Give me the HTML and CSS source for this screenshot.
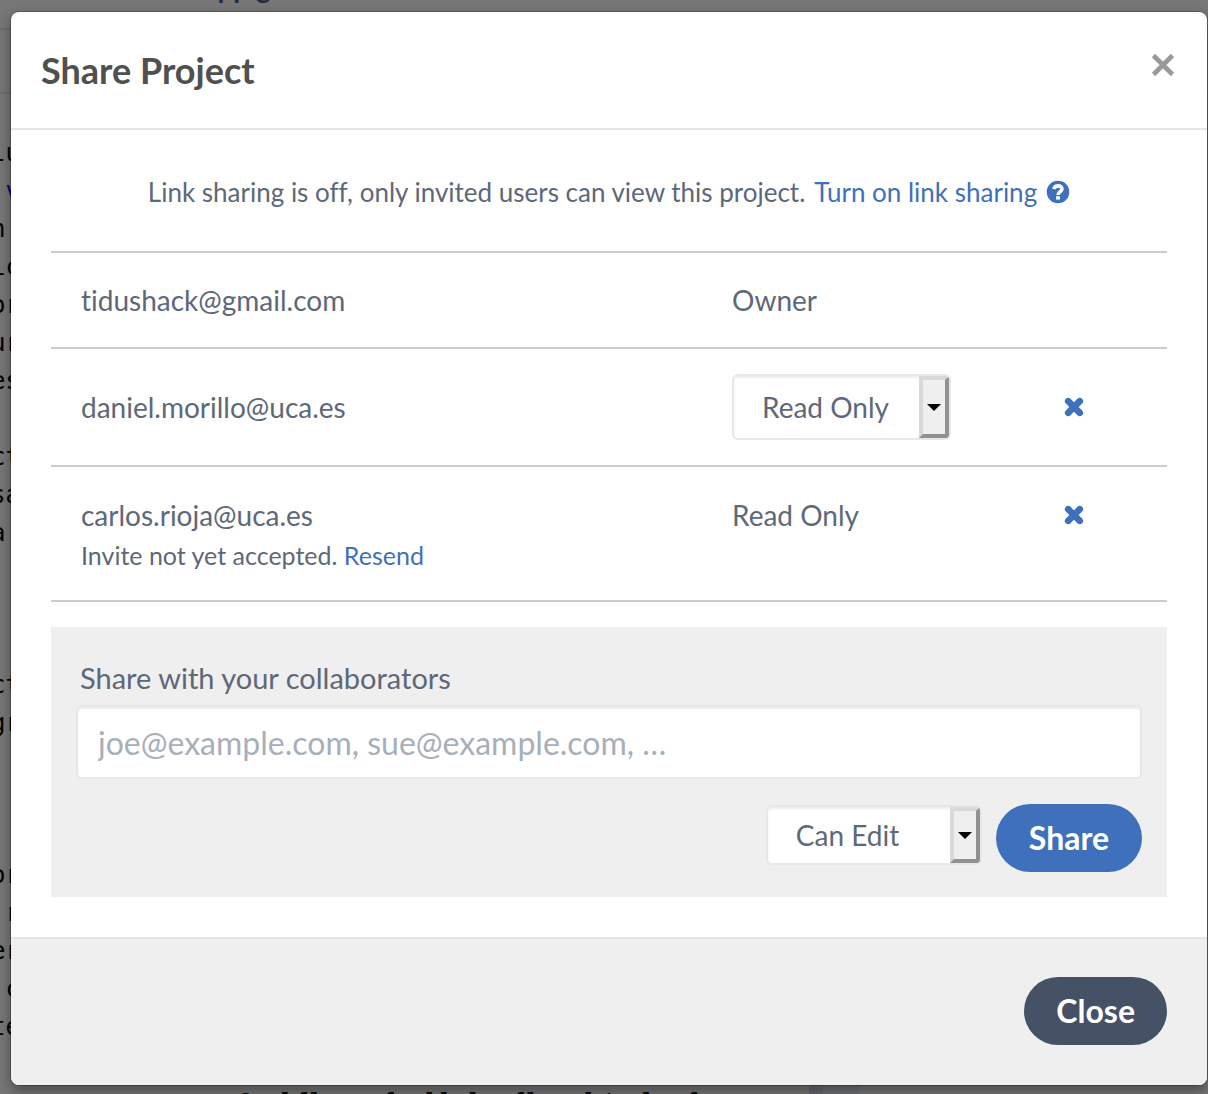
FILE: index.html
```html
<!DOCTYPE html>
<html lang="en">
<head>
<meta charset="utf-8">
<meta name="viewport" content="width=device-width, initial-scale=1">
<title>Share Project</title>
<link rel="stylesheet" href="styles.css">
</head>
<body>
<div class="editor" aria-hidden="true">
<div class="toolbar"><span class="project-name">App go</span></div>
<div class="tabs"></div>
<pre class="code">

lu
 <span class="keyword">v</span>
n
ic
or
ur
es

ct
sa
a



ct
gr



or
 r
er
 c
te

                 Caslfl comfuell la fl esl/col uf</pre>
<div class="resizer"></div>
</div>
<div class="modal" role="dialog" aria-modal="true" aria-labelledby="title">
  <header class="modal-header">
    <h1 class="title" id="title">Share Project</h1>
    <button class="dismiss" type="button" aria-label="Dismiss">
      <svg width="24" height="24" viewBox="0 0 24 24"><path d="M2.500 2.500L21.500 21.500M21.500 2.500L2.500 21.500" stroke="#999" stroke-width="4.600" fill="none"/></svg>
    </button>
  </header>
  <main class="modal-body">
    <p class="link-sharing">
      <span>Link sharing is off, only invited users can view this project.</span>
      <a href="#">Turn on link sharing</a>
      <svg class="help" width="24" height="24" viewBox="0 0 24 24" role="img" aria-label="Help"><circle cx="12" cy="12" r="11.300" fill="#3f70bc"/><path d="M7.800 9C9 4.600 16 5 16 9C16 12 12 11.600 12 15" stroke="#fff" stroke-width="3.600" fill="none"/><path d="M10.100 16.200h3.800v3.400h-3.800z" fill="#fff"/></svg>
    </p>
    <ul class="members">
      <li class="member">
        <div class="email">tidushack@gmail.com</div>
        <div class="role">Owner</div>
      </li>
      <li class="member member-editable">
        <div class="email">daniel.morillo@uca.es</div>
        <div class="role">
          <div class="select-box">
            <select aria-label="Access for daniel.morillo@uca.es"><option>Read Only</option><option>Can Edit</option></select>
            <span class="arrow"></span>
          </div>
        </div>
        <button class="remove" type="button" aria-label="Remove daniel.morillo@uca.es">
          <svg width="20" height="20" viewBox="0 0 20 20"><path d="M4.200 4.200L15.800 15.800M15.800 4.200L4.200 15.800" stroke="#3f70bc" stroke-width="6.600" stroke-linecap="round" fill="none"/></svg>
        </button>
      </li>
      <li class="member member-invited">
        <div class="email">
          <div>carlos.rioja@uca.es</div>
          <div class="invite">Invite not yet accepted. <a href="#">Resend</a></div>
        </div>
        <div class="role">Read Only</div>
        <button class="remove" type="button" aria-label="Remove carlos.rioja@uca.es">
          <svg width="20" height="20" viewBox="0 0 20 20"><path d="M4.200 4.200L15.800 15.800M15.800 4.200L4.200 15.800" stroke="#3f70bc" stroke-width="6.600" stroke-linecap="round" fill="none"/></svg>
        </button>
      </li>
    </ul>
    <form class="invite-form">
      <label class="invite-label" for="emails">Share with your collaborators</label>
      <input class="emails" id="emails" type="text" placeholder="joe@example.com, sue@example.com, …">
      <div class="actions">
        <div class="select-box select-small">
          <select aria-label="Access level"><option>Can Edit</option><option>Read Only</option></select>
          <span class="arrow"></span>
        </div>
        <button class="btn btn-primary" type="button">Share</button>
      </div>
    </form>
  </main>
  <footer class="modal-footer">
    <button class="btn btn-dark" type="button">Close</button>
  </footer>
</div>
</body>
</html>
```
FILE: styles.css
```css
* { box-sizing: border-box; }
body {
  margin: 0;
  position: relative;
  padding: 12px 1px 9px 11px;
  background: #777;
  color: #5d6879;
  font-family: Lato, "Open Sans", sans-serif;
  font-size: 28px;
  line-height: 40px;
  font-variant-ligatures: none;
}
a { color: #3f70bc; text-decoration: none; }
button, input, select { font: inherit; color: inherit; font-variant-ligatures: none; }
button { border: 0; padding: 0; background: none; cursor: pointer; }

.editor { position: absolute; inset: 0; overflow: hidden; }
.toolbar {
  display: flex;
  align-items: flex-start;
  height: 30px;
  padding-left: 198px;
  border-bottom: 2px solid #6c6d70;
  color: #232b3c;
}
.project-name { margin-top: -33px; font-weight: 700; }
.tabs { height: 64px; border-bottom: 2px solid #6c6d70; }
.code {
  margin: 2px 0 0 -9px;
  color: #000;
  font-family: "DejaVu Sans Mono", monospace;
  font-size: 24px;
  line-height: 38px;
}
.keyword { color: #00008b; }
.resizer {
  position: absolute;
  left: 67%;
  bottom: 0;
  width: 50px;
  height: 20px;
  border-left: 14px solid #66696e;
  background: #6f7174;
}

.modal {
  position: relative;
  background: #fff;
  border-radius: 8px;
  box-shadow: 0 0 0 1px rgba(0, 0, 0, 0.2), 0 6px 14px rgba(0, 0, 0, 0.4);
}
.modal-header {
  display: flex;
  justify-content: space-between;
  align-items: center;
  height: 118px;
  padding: 0 32px 0 30px;
  border-bottom: 2px solid #e5e5e5;
}
.title { margin: 0; color: #505050; font-size: 36px; font-weight: 700; line-height: 48px; }
.dismiss { display: flex; margin-bottom: 10px; }
.modal-body { padding: 40px; }
.link-sharing {
  display: flex;
  justify-content: center;
  align-items: center;
  gap: 9px;
  margin: 0;
  padding: 2px 0 39px;
  font-size: 26px;
}
.members { margin: 0 0 25px; padding: 0; list-style: none; border-top: 2px solid #ccc; }
.member {
  display: grid;
  grid-template-columns: 7fr 3fr 2fr;
  align-items: center;
  min-height: 96px;
  border-bottom: 2px solid #ccc;
}
.email, .role { min-width: 0; padding-left: 30px; }
.member-editable { min-height: 118px; }
.member-invited { min-height: 135px; align-items: start; padding-top: 28px; }
.invite { font-size: 25px; }
.remove { display: flex; align-items: center; justify-content: center; height: 40px; }
.select-box {
  display: flex;
  width: 219px;
  height: 66px;
  border: 2px solid #e4e8ee;
  border-radius: 6px;
  background: #fff;
  box-shadow: inset 0 2px 2px #ececec;
  overflow: hidden;
}
.select-box select {
  flex: 1;
  min-width: 0;
  padding: 0 0 0 28px;
  border: 0;
  background: none;
  appearance: none;
}
.arrow {
  display: grid;
  place-items: center;
  width: 30px;
  border: 4px solid;
  border-color: #d9d9d9 #919191 #919191 #d9d9d9;
  background: #efefef;
  pointer-events: none;
}
.arrow::before { content: ""; border: 7px solid transparent; border-top-color: #000; border-bottom: 0; }
.select-small { width: 216px; height: 60px; margin-top: 1px; }

.invite-form { display: flex; flex-direction: column; padding: 31px 25px 25px; background: #efefef; }
.invite-label { padding-left: 4px; font-size: 29px; }
.emails {
  height: 74px;
  margin: 7px 0 25px;
  padding: 0 20px;
  border: 2px solid #e4e8ee;
  border-radius: 6px;
  background: #fff;
  box-shadow: inset 0 2px 2px #ececec;
  font-size: 32px;
}
.emails::placeholder { color: #a7afbb; opacity: 1; }
.actions { display: flex; justify-content: flex-end; align-items: flex-start; gap: 14px; }
.btn { height: 68px; padding: 0 32px; border-radius: 34px; color: #fff; font-size: 32px; font-weight: 700; }
.btn-primary { padding: 0 33px; background: #3f70bc; }
.btn-dark { background: #455165; }
.modal-footer {
  display: flex;
  justify-content: flex-end;
  padding: 38px 40px 40px;
  border-top: 2px solid #e5e5e5;
  border-radius: 0 0 8px 8px;
  background: #efefef;
}
```
